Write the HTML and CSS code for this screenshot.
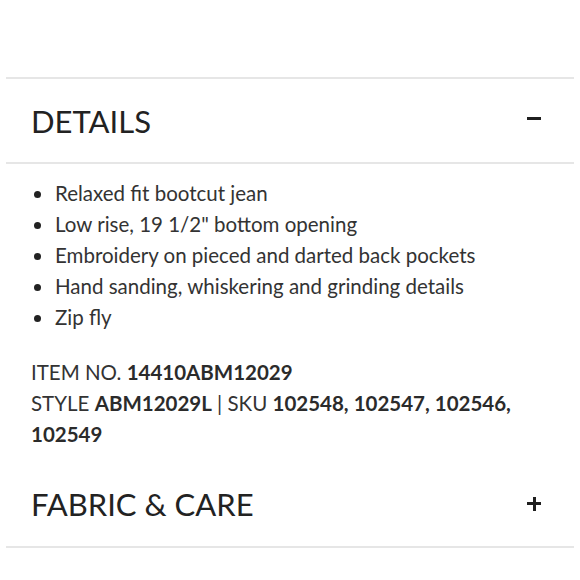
FILE: index.html
```html
<!DOCTYPE html>
<html lang="en">
<head>
    <meta charset="UTF-8">
    <meta name="viewport" content="width=device-width, initial-scale=1.0">
    <title>Product Details</title>
    <link rel="stylesheet" href="styles.css">
</head>
<body>
    <div class="accordion">
        <section class="panel open">
            <div class="panel-head">
                <h2>DETAILS</h2>
                <span class="toggle minus"></span>
            </div>
            <div class="panel-body">
                <ul class="features">
                    <li>Relaxed fit bootcut jean</li>
                    <li>Low rise, 19 1/2" bottom opening</li>
                    <li>Embroidery on pieced and darted back pockets</li>
                    <li>Hand sanding, whiskering and grinding details</li>
                    <li>Zip fly</li>
                </ul>
                <p class="meta">
                    ITEM NO. <strong>14410ABM12029</strong><br>
                    STYLE <strong>ABM12029L</strong> | SKU <strong>102548, 102547, 102546, 102549</strong>
                </p>
            </div>
        </section>

        <section class="panel">
            <div class="panel-head">
                <h2>FABRIC &amp; CARE</h2>
                <span class="toggle plus"></span>
            </div>
        </section>

        <section class="panel">
            <div class="panel-head">
                <h2>REVIEWS</h2>
                <span class="toggle plus"></span>
            </div>
        </section>
    </div>
</body>
</html>
```

FILE: styles.css
```css
* {
    margin: 0;
    padding: 0;
    box-sizing: border-box;
}

body {
    font-family: Lato, 'Open Sans', sans-serif;
    background: #fff;
    color: #2b2b2b;
}

.accordion {
    margin: 77px 6px 0;
    border-top: 2px solid #e6e6e6;
}

.panel-head {
    height: 85px;
    display: flex;
    align-items: center;
    justify-content: space-between;
    padding: 0 33px 0 25px;
}

.panel-head h2 {
    font-size: 31px;
    font-weight: 400;
    color: #222;
}

.panel {
    border-bottom: 2px solid #e6e6e6;
}

.panel.open {
    border-bottom: none;
}

.panel.open .panel-head {
    border-bottom: 2px solid #e6e6e6;
}

.toggle {
    position: relative;
    width: 14px;
    height: 14px;
}

.toggle::before,
.toggle::after {
    content: "";
    position: absolute;
    background: #1f1f1f;
}

.toggle::before {
    left: 0;
    top: 5.5px;
    width: 14px;
    height: 3px;
}

.minus::before {
    top: 3px;
}

.plus::after {
    left: 5.5px;
    top: 0;
    width: 3px;
    height: 14px;
}

.panel-body {
    padding: 14px 25px 11px;
    font-size: 20.5px;
    line-height: 31px;
    color: #333;
}

.features {
    list-style: none;
    margin-bottom: 24px;
}

.features li {
    position: relative;
    padding-left: 24px;
}

.features li::before {
    content: "";
    position: absolute;
    left: 3px;
    top: 13px;
    width: 7px;
    height: 7px;
    border-radius: 50%;
    background: #222;
}

.meta strong {
    font-weight: 700;
    color: #2b2b2b;
}
```
